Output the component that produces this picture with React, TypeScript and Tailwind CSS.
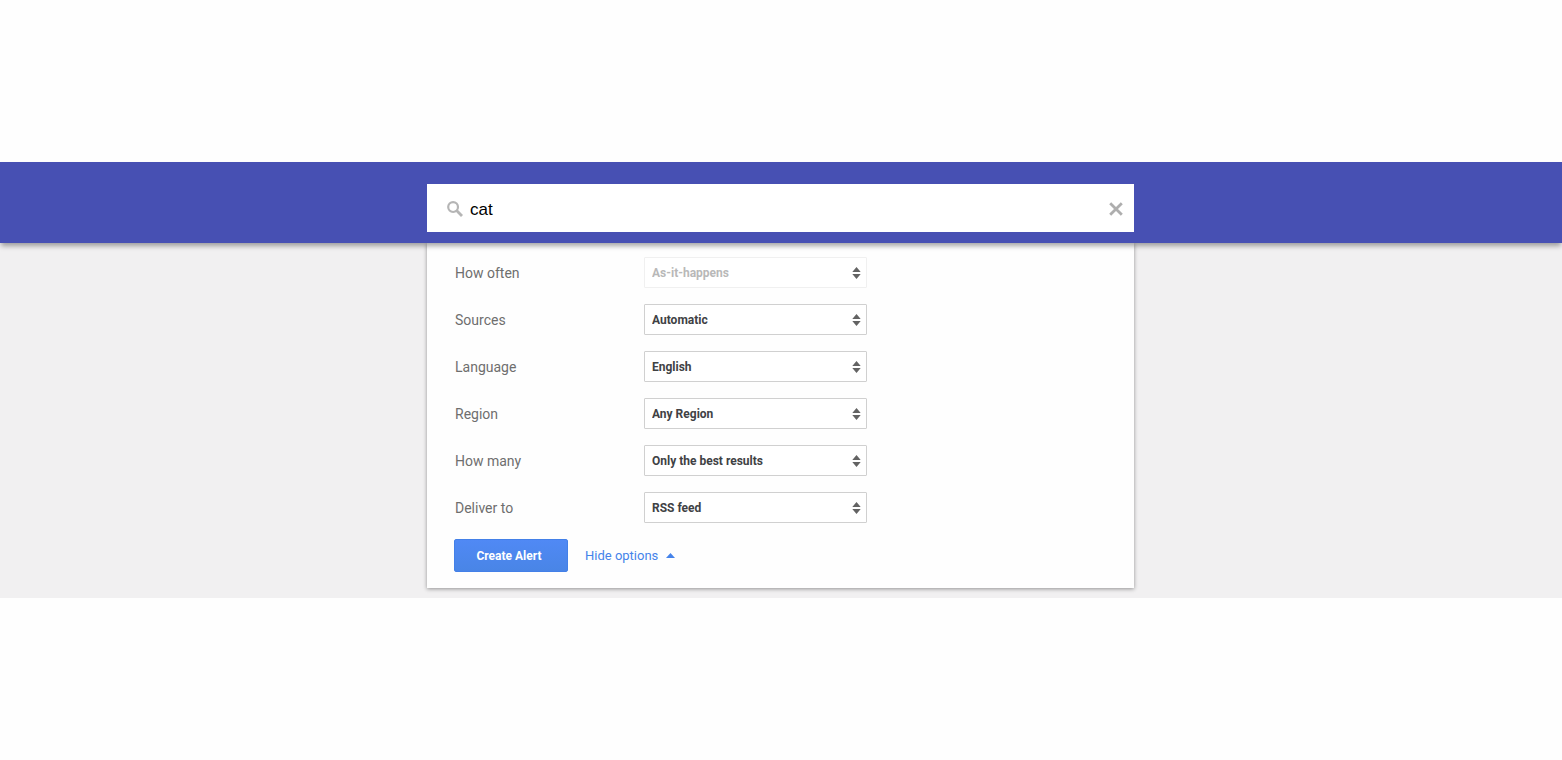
import React, { useState } from 'react';

interface Option {
  id: string;
  label: string;
  values: string[];
  disabled?: boolean;
}

const OPTIONS: Option[] = [
  { id: 'frequency', label: 'How often', values: ['As-it-happens'], disabled: true },
  { id: 'sources', label: 'Sources', values: ['Automatic', 'News', 'Blogs', 'Web'] },
  { id: 'language', label: 'Language', values: ['English', 'Any Language'] },
  { id: 'region', label: 'Region', values: ['Any Region', 'United States'] },
  { id: 'volume', label: 'How many', values: ['Only the best results', 'All results'] },
  { id: 'delivery', label: 'Deliver to', values: ['RSS feed', 'Email'] },
];

const SearchIcon = () => (
  <svg className="h-4 w-4 shrink-0" viewBox="0 0 16 16" fill="none" stroke="#b5b5b5" aria-hidden="true">
    <circle cx="6.1" cy="6.1" r="4.9" strokeWidth="2.2" />
    <path d="M9.6 9.6L15 15" strokeWidth="2.8" />
  </svg>
);

const ClearIcon = () => (
  <svg className="h-[14px] w-[14px]" viewBox="0 0 14 14" fill="none" stroke="#aeaeae" aria-hidden="true">
    <path d="M1.2 1.2L12.8 12.8M12.8 1.2L1.2 12.8" strokeWidth="2.8" />
  </svg>
);

const OptionRow = ({ option }: { option: Option }) => (
  <div className="flex items-center">
    <label htmlFor={option.id} className="w-[190px] shrink-0 pl-px text-[14px] leading-5 text-[#6e6e6e]">
      {option.label}
    </label>
    <div className="relative w-[223px]">
      <select
        id={option.id}
        disabled={option.disabled}
        className="block h-[31px] w-full appearance-none rounded-[1px] border border-[#d0d0d0] bg-white pr-5 pl-[7px] text-[12px] font-bold text-[#404144] disabled:border-[#f0f0f0] disabled:text-[#b8b8b8] disabled:opacity-100"
      >
        {option.values.map((value) => (
          <option key={value}>{value}</option>
        ))}
      </select>
      <svg
        className="pointer-events-none absolute top-[10px] right-[6px] h-3 w-[9px]"
        viewBox="0 0 9 12"
        fill="#636363"
        aria-hidden="true"
      >
        <path d="M4.5 0L8.7 5H0.3zM4.5 12L8.7 7H0.3z" />
      </svg>
    </div>
  </div>
);

export default function App() {
  const [query, setQuery] = useState('cat');
  const [open, setOpen] = useState(true);

  return (
    <div className="min-h-screen bg-[#fefefe] pt-[162px] font-[Roboto,sans-serif]">
      <header className="relative bg-[#4750b3] pt-[22px] pr-px pb-[11px] shadow-[0_4px_5px_-1px_rgba(0,0,0,0.35)]">
        <div className="mx-auto flex h-12 w-full max-w-[707px] items-center bg-white pt-0.5 pr-[11px] pl-5">
          <SearchIcon />
          <input
            type="text"
            aria-label="Create an alert about"
            value={query}
            onChange={(e) => setQuery(e.target.value)}
            className="ml-[7px] min-w-0 flex-1 pt-0.5 font-['Liberation_Sans',sans-serif] text-[17px] text-black outline-none"
          />
          <button type="button" aria-label="Clear" onClick={() => setQuery('')}>
            <ClearIcon />
          </button>
        </div>
      </header>

      <main className="bg-[#f1f0f1] pr-px pb-[10px]">
        <form
          onSubmit={(e) => e.preventDefault()}
          className="mx-auto w-full max-w-[707px] bg-[#fefefe] px-[27px] pt-[14px] pb-4 shadow-[0_1px_4px_rgba(0,0,0,0.4)]"
        >
          {open && (
            <div className="mb-4 flex flex-col gap-4">
              {OPTIONS.map((option) => (
                <OptionRow key={option.id} option={option} />
              ))}
            </div>
          )}
          <div className="flex items-center gap-[17px]">
            <button
              type="submit"
              className="h-[33px] w-[114px] rounded-[2px] border border-[#4380e8] bg-linear-to-b from-[#5089f5] to-[#4985e6] pr-1 text-[12px] font-bold text-white"
            >
              Create Alert
            </button>
            <button
              type="button"
              onClick={() => setOpen(!open)}
              className="flex items-center gap-2 text-[13px] text-[#4583ea]"
            >
              {open ? 'Hide options' : 'Show options'}
              <svg className="h-[5px] w-[9px]" viewBox="0 0 9 5" fill="#4583ea" aria-hidden="true">
                <path d={open ? 'M4.5 0L9 5H0z' : 'M4.5 5L9 0H0z'} />
              </svg>
            </button>
          </div>
        </form>
      </main>
    </div>
  );
}
